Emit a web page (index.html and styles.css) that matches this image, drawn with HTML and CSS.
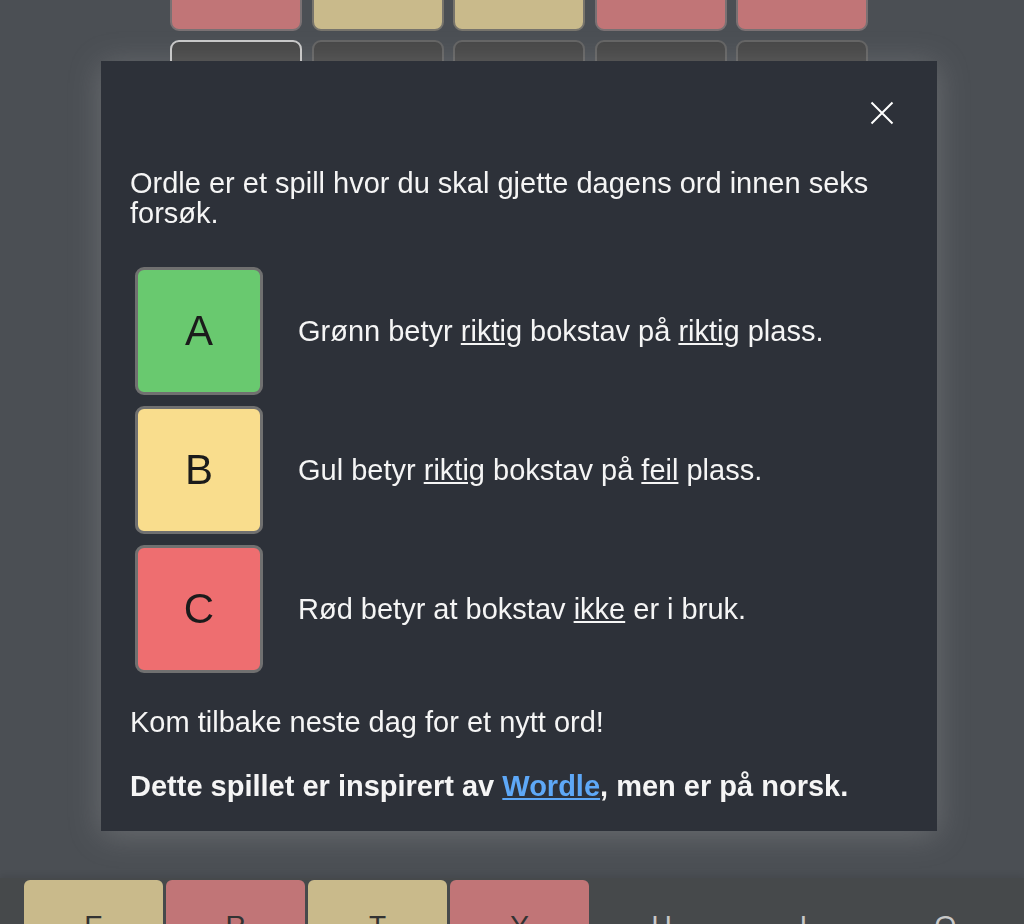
FILE: index.html
```html
<!DOCTYPE html>
<html lang="no">
<head>
<meta charset="utf-8">
<title>Ordle</title>
<link rel="stylesheet" href="styles.css">
</head>
<body>
<div class="page">
  <div class="board">
    <div class="row">
      <div class="cell red"></div>
      <div class="cell yellow"></div>
      <div class="cell yellow"></div>
      <div class="cell red"></div>
      <div class="cell red"></div>
    </div>
    <div class="row">
      <div class="cell empty active"></div>
      <div class="cell empty"></div>
      <div class="cell empty"></div>
      <div class="cell empty"></div>
      <div class="cell empty"></div>
    </div>
  </div>
  <div class="keyboard">
    <div class="key yellow">E</div>
    <div class="key red">R</div>
    <div class="key yellow">T</div>
    <div class="key red">Y</div>
    <div class="key plain">U</div>
    <div class="key plain">I</div>
    <div class="key plain">O</div>
  </div>
</div>

<div class="modal">
  <div class="modal-header">
    <button class="close" aria-label="Lukk">
      <svg width="24" height="24" viewBox="0 0 24 24"><path d="M1.5 1.5 L22.5 22.5 M22.5 1.5 L1.5 22.5" stroke="#ffffff" stroke-width="2" fill="none"/></svg>
    </button>
  </div>
  <p>Ordle er et spill hvor du skal gjette dagens ord innen seks forsøk.</p>
  <div class="examples">
    <div class="example">
      <div class="tile green">A</div>
      <span class="desc">Grønn betyr <u>riktig</u> bokstav på <u>riktig</u> plass.</span>
    </div>
    <div class="example">
      <div class="tile gold">B</div>
      <span class="desc">Gul betyr <u>riktig</u> bokstav på <u>feil</u> plass.</span>
    </div>
    <div class="example">
      <div class="tile coral">C</div>
      <span class="desc">Rød betyr at bokstav <u>ikke</u> er i bruk.</span>
    </div>
  </div>
  <p>Kom tilbake neste dag for et nytt ord!</p>
  <p class="strong">Dette spillet er inspirert av <a href="#">Wordle</a>, men er på norsk.</p>
</div>
</body>
</html>
```
FILE: styles.css
```css
html, body {
  margin: 0;
  padding: 0;
  height: 924px;
  overflow: hidden;
  background: #4b4f54;
  font-family: "Liberation Sans", Arial, sans-serif;
}

.page {
  height: 924px;
  display: flex;
  flex-direction: column;
  justify-content: space-between;
}

.board {
  margin-top: -101px;
  padding-left: 170px;
  display: flex;
  flex-direction: column;
  gap: 9px;
}

.row {
  display: flex;
  gap: 9.5px;
}

.cell {
  width: 128px;
  height: 128px;
  border: 2px solid #767676;
  border-radius: 9px;
}

.cell.red { background: #c17577; border-color: #7a7173; }
.cell.yellow { background: #c9ba8b; border-color: #77746c; }
.cell.empty { background: #474747; border-color: #646464; }
.cell.empty.active { border-color: #c9c9c9; }

.keyboard {
  height: 44px;
  padding: 2px 24px 0;
  background: #46494b;
  display: flex;
  gap: 3px;
  box-shadow: 0 -3px 6px rgba(0, 0, 0, 0.08);
}

.key {
  width: 139px;
  height: 90px;
  flex: none;
  border-radius: 6px 6px 0 0;
  text-align: center;
  box-sizing: border-box;
  padding-top: 30px;
  font-size: 28px;
  line-height: 32px;
  color: #333333;
}

.key.yellow { background: #c9ba8b; }
.key.red { background: #c17577; }
.key.plain { color: #c8c8c8; }

.modal {
  position: fixed;
  left: 101px;
  top: 61px;
  width: 836px;
  box-sizing: border-box;
  padding: 30px 29px;
  background: #2d3139;
  color: #f5f5f5;
  font-size: 29px;
  line-height: 30px;
  box-shadow: 0 4px 30px rgba(190, 190, 190, 0.28);
}

.modal p {
  margin: 33px 0 34px;
}

.modal p:last-child {
  margin-bottom: 0;
}

.modal-header {
  height: 44px;
  display: flex;
  justify-content: flex-end;
  align-items: center;
}

.close {
  background: none;
  border: none;
  padding: 0;
  margin-right: 14px;
  width: 24px;
  height: 24px;
  cursor: pointer;
}

.close svg { display: block; }

.examples {
  margin: 39px 0 34px;
  display: flex;
  flex-direction: column;
  gap: 11px;
}

.example {
  display: flex;
  align-items: center;
}

.tile {
  margin-left: 5px;
  width: 122px;
  height: 122px;
  border: 3px solid #707070;
  border-radius: 9px;
  display: flex;
  align-items: center;
  justify-content: center;
  font-size: 42px;
  color: #1b1b1b;
}

.tile.green { background: #69c96f; }
.tile.gold { background: #f9dd8d; }
.tile.coral { background: #ee6e70; }

.desc {
  margin-left: 35px;
}

.strong {
  font-weight: bold;
}

.strong a {
  color: #5ea8f7;
  text-decoration: underline;
}
```
